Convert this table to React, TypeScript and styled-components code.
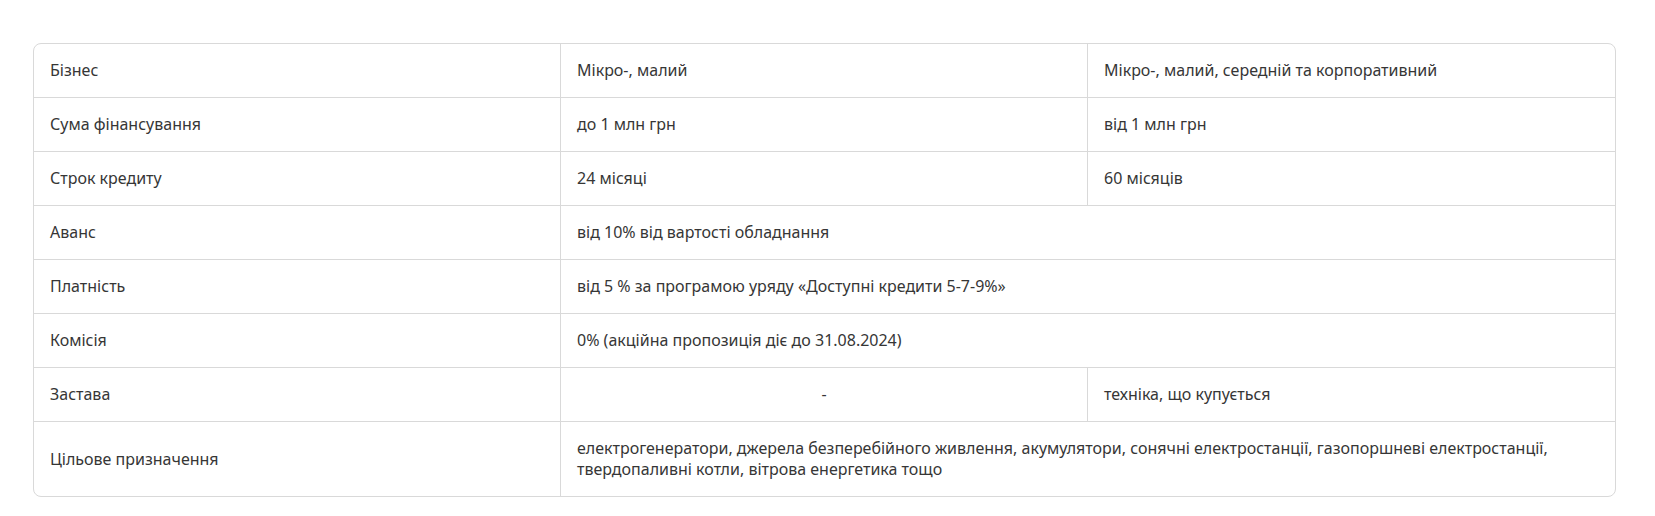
import React from "react";
import styled, { createGlobalStyle } from "styled-components";

const GlobalStyle = createGlobalStyle`
  html, body {
    margin: 0;
    padding: 0;
    background: #ffffff;
  }
  body {
    font-family: "Noto Sans", "Liberation Sans", sans-serif;
  }
`;

const Page = styled.div`
  padding: 43px 39px 20px 33px;
`;

const Table = styled.div`
  display: grid;
  grid-template-columns: 527px 527px 1fr;
  border: 1px solid #d9d9d9;
  border-radius: 8px;
  overflow: hidden;
  background: #ffffff;
`;

const Cell = styled.div<{ $span?: number; $center?: boolean; $last?: boolean; $lastRow?: boolean }>`
  grid-column: span ${(p) => p.$span ?? 1};
  display: flex;
  align-items: center;
  justify-content: ${(p) => (p.$center ? "center" : "flex-start")};
  text-align: ${(p) => (p.$center ? "center" : "left")};
  padding: 16px 16px;
  font-size: 16px;
  line-height: 21px;
  color: #363636;
  border-right: ${(p) => (p.$last ? "none" : "1px solid #d9d9d9")};
  border-bottom: ${(p) => (p.$lastRow ? "none" : "1px solid #d9d9d9")};
  min-width: 0;
`;

type Row = {
  label: string;
  values: { text: string; span?: number; center?: boolean }[];
};

const rows: Row[] = [
  { label: "Бізнес", values: [{ text: "Мікро-, малий" }, { text: "Мікро-, малий, середній та корпоративний" }] },
  { label: "Сума фінансування", values: [{ text: "до 1 млн грн" }, { text: "від 1 млн грн" }] },
  { label: "Строк кредиту", values: [{ text: "24 місяці" }, { text: "60 місяців" }] },
  { label: "Аванс", values: [{ text: "від 10% від вартості обладнання", span: 2 }] },
  { label: "Платність", values: [{ text: "від 5 % за програмою уряду «Доступні кредити 5-7-9%»", span: 2 }] },
  { label: "Комісія", values: [{ text: "0% (акційна пропозиція діє до 31.08.2024)", span: 2 }] },
  { label: "Застава", values: [{ text: "-", center: true }, { text: "техніка, що купується" }] },
  {
    label: "Цільове призначення",
    values: [
      {
        text:
          "електрогенератори, джерела безперебійного живлення, акумулятори, сонячні електростанції, газопоршневі електростанції, твердопаливні котли, вітрова енергетика тощо",
        span: 2,
      },
    ],
  },
];

export default function App() {
  return (
    <>
      <GlobalStyle />
      <Page>
        <Table role="table">
          {rows.map((row, ri) => {
            const lastRow = ri === rows.length - 1;
            return (
              <React.Fragment key={row.label}>
                <Cell role="cell" $lastRow={lastRow}>{row.label}</Cell>
                {row.values.map((v, vi) => (
                  <Cell
                    role="cell"
                    key={vi}
                    $span={v.span}
                    $center={v.center}
                    $last={vi === row.values.length - 1}
                    $lastRow={lastRow}
                  >
                    {v.text}
                  </Cell>
                ))}
              </React.Fragment>
            );
          })}
        </Table>
      </Page>
    </>
  );
}
